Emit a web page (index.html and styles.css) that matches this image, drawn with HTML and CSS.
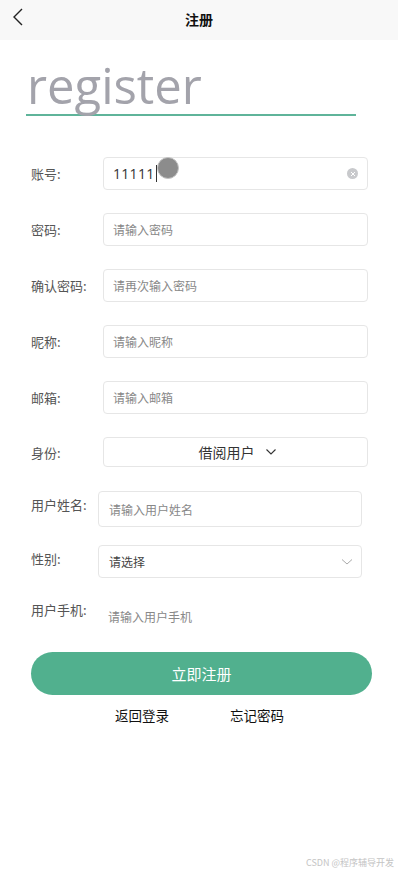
FILE: index.html
```html
<!DOCTYPE html>
<html lang="zh">
<head>
  <meta charset="UTF-8" />
  <meta name="viewport" content="width=device-width, initial-scale=1.0"/>
  <title>注册</title>
  <link rel="stylesheet" href="styles.css">
</head>
<body>
  <div class="nav-bar">
    <svg class="nav-back" width="14" height="20" viewBox="0 0 14 20">
      <path d="M11 2 L3 10 L11 18" fill="none" stroke="#222" stroke-width="1.4"/>
    </svg>
    <span class="nav-title">注册</span>
  </div>

  <div class="page">
    <div class="page-head">register</div>

    <div class="form">
      <div class="row">
        <span class="label">账号:</span>
        <div class="box">
          <span class="value">11111</span><span class="caret"></span>
          <span class="clear">
            <svg width="6" height="6" viewBox="0 0 6 6"><path d="M1 1 L5 5 M5 1 L1 5" stroke="#fff" stroke-width="1"/></svg>
          </span>
          <span class="touch"></span>
        </div>
      </div>
      <div class="row">
        <span class="label">密码:</span>
        <div class="box"><span class="placeholder">请输入密码</span></div>
      </div>
      <div class="row">
        <span class="label">确认密码:</span>
        <div class="box"><span class="placeholder">请再次输入密码</span></div>
      </div>
      <div class="row">
        <span class="label">昵称:</span>
        <div class="box"><span class="placeholder">请输入昵称</span></div>
      </div>
      <div class="row">
        <span class="label">邮箱:</span>
        <div class="box"><span class="placeholder">请输入邮箱</span></div>
      </div>
      <div class="row">
        <span class="label">身份:</span>
        <div class="box picker">
          <span class="picker-text">借阅用户</span>
          <svg width="12" height="8" viewBox="0 0 12 8"><path d="M1.5 1.5 L6 6 L10.5 1.5" fill="none" stroke="#333" stroke-width="1.1"/></svg>
        </div>
      </div>
    </div>

    <div class="form2">
      <div class="row2">
        <span class="label2">用户姓名:</span>
        <div class="box2 tall"><span class="placeholder">请输入用户姓名</span></div>
      </div>
      <div class="row2">
        <span class="label2">性别:</span>
        <div class="box2 select">
          <span class="select-text">请选择</span>
          <svg width="12" height="8" viewBox="0 0 12 8"><path d="M1 1.5 L6 6 L11 1.5" fill="none" stroke="#aaa" stroke-width="1"/></svg>
        </div>
      </div>
      <div class="row2">
        <span class="label2">用户手机:</span>
        <div class="bare"><span class="placeholder">请输入用户手机</span></div>
      </div>
    </div>

    <button class="submit">立即注册</button>
    <div class="links">
      <span>返回登录</span>
      <span>忘记密码</span>
    </div>
  </div>

  <div class="mark">CSDN @程序辅导开发</div>
</body>
</html>
```

FILE: styles.css
```css
body {
  margin: 0;
  background: #fff;
  font-family: "Noto Sans CJK SC", "Noto Sans", sans-serif;
  color: #333;
  height: 874px;
  position: relative;
  overflow: hidden;
}

.nav-bar {
  height: 40px;
  background: #f8f8f8;
  display: flex;
  align-items: center;
  justify-content: center;
  position: relative;
}

.nav-back {
  position: absolute;
  left: 11px;
  top: 7px;
}

.nav-title {
  font-size: 14px;
  font-weight: 700;
  color: #111;
  padding-bottom: 3px;
}

.page {
  padding: 0 30px 0 26px;
}

.page-head {
  font-family: "Open Sans", sans-serif;
  font-size: 49px;
  color: #a3a3ab;
  line-height: 1;
  padding: 21px 0 0 1px;
  height: 53px;
  border-bottom: 2px solid #5fb49a;
  margin-right: 12px;
}

.form {
  margin-top: 41px;
  display: flex;
  flex-direction: column;
  gap: 23px;
}

.row {
  display: flex;
  align-items: center;
}

.label {
  width: 72px;
  padding-left: 5px;
  font-size: 13px;
  color: #555;
  flex-shrink: 0;
}

.box {
  flex: 1;
  height: 31px;
  border: 1px solid #e6e6e6;
  border-radius: 4px;
  display: flex;
  align-items: center;
  padding: 0 9px;
  position: relative;
}

.placeholder {
  font-size: 12px;
  color: #888;
}

.value {
  font-family: "Open Sans", sans-serif;
  font-size: 14px;
  color: #333;
  letter-spacing: 0.3px;
}

.caret {
  width: 1px;
  height: 17px;
  background: #333;
  margin-left: 1px;
}

.clear {
  margin-left: auto;
  width: 11px;
  height: 11px;
  border-radius: 50%;
  background: #c8c9cc;
  display: flex;
  align-items: center;
  justify-content: center;
}

.touch {
  position: absolute;
  left: 53px;
  top: -1px;
  width: 20px;
  height: 20px;
  border-radius: 50%;
  background: #8c8c8c;
  border: 1px solid #c4c4c4;
}

.picker {
  justify-content: center;
  gap: 10px;
  height: 28px;
}

.picker-text {
  font-size: 14px;
  font-weight: 400;
  color: #333;
  margin-left: 4px;
}

.form2 {
  margin-top: 24px;
  display: flex;
  flex-direction: column;
  gap: 18px;
}

.row2 {
  display: flex;
  align-items: flex-start;
}

.label2 {
  width: 67px;
  padding-left: 5px;
  font-size: 13px;
  color: #555;
  flex-shrink: 0;
  padding-top: 4px;
}

.box2 {
  flex: 1;
  border: 1px solid #e6e6e6;
  border-radius: 4px;
  display: flex;
  align-items: center;
  padding: 0 10px;
  margin-right: 6px;
}

.box2.tall {
  height: 34px;
}

.box2.select {
  height: 31px;
  justify-content: space-between;
  padding-right: 8px;
}

.select-text {
  font-size: 12px;
  color: #444;
}

.bare {
  padding: 7px 10px 0 10px;
}

.submit {
  display: block;
  width: 341px;
  height: 43px;
  margin: 25px 0 0 5px;
  border: none;
  border-radius: 22px;
  background: #51b08e;
  color: #fff;
  font-family: "Noto Sans CJK SC", sans-serif;
  font-size: 15px;
}

.links {
  display: flex;
  gap: 61px;
  padding-left: 89px;
  margin-top: 10px;
  font-size: 13.5px;
  color: #111;
}

.mark {
  position: absolute;
  right: 4px;
  bottom: 5px;
  font-size: 9px;
  color: #c4c4c4;
}
```
